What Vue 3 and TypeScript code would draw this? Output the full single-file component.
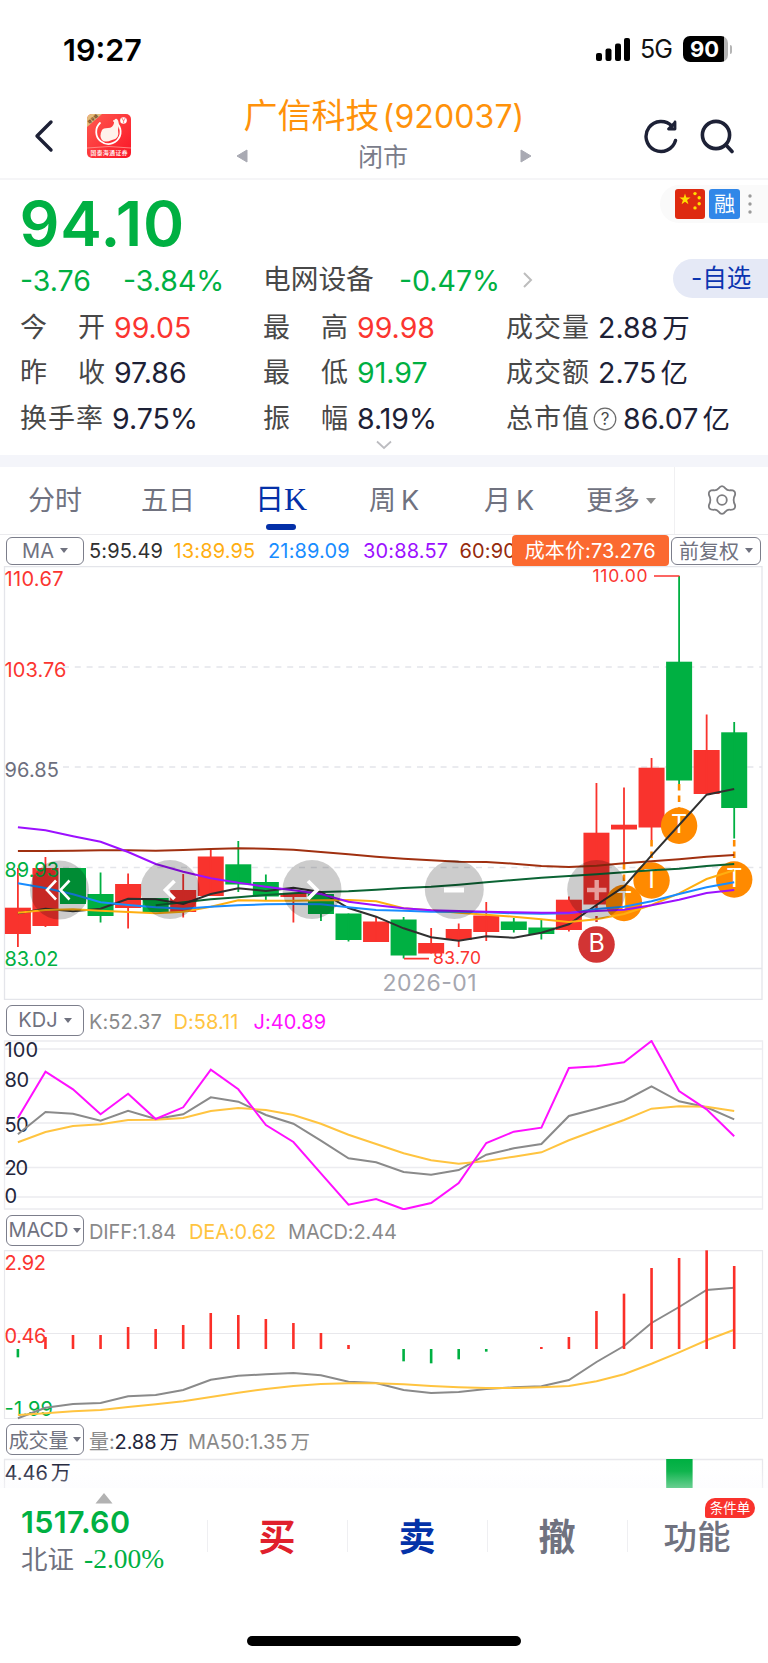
<script setup lang="ts">
type Candle = [up: number, top: number, bottom: number, high: number, low: number]

const STEP = 27.55
const X0 = 17.9
const cx = (i: number): number => X0 + STEP * i

const path = (ys: number[], base: number, start = 0): string =>
  ys.map((y, i) => `${cx(i + start).toFixed(1)},${(base + y / 3).toFixed(1)}`).join(' ')

const candles: Candle[] = [
  [1, 907.7, 934, 868, 947], [1, 868, 926, 857, 927], [0, 868, 904, 868, 904],
  [0, 894, 916, 872.5, 922.5], [1, 884, 908, 873.5, 928.5], [0, 898, 912, 898, 912],
  [1, 890, 912, 874, 917.5], [1, 856.5, 896, 849, 896], [0, 864.3, 884.5, 841, 892],
  [0, 882, 896.5, 874.5, 900], [1, 893, 897, 893, 922.5], [0, 894, 914, 894, 921],
  [0, 913.5, 940, 913.5, 941.5], [1, 921.5, 942, 916.5, 942], [0, 919.5, 955.5, 917, 958.5],
  [1, 943, 953.5, 928, 953.5], [1, 929, 940, 923.5, 947], [1, 915.5, 932, 902, 941],
  [0, 921.5, 930, 918, 932.5], [0, 927.5, 934, 919.5, 939.5], [1, 899.7, 930, 896.5, 931.5],
  [1, 832.7, 904.5, 783, 904.5], [1, 824.7, 829.5, 787.5, 863], [1, 767.7, 827.5, 758, 840],
  [0, 661.7, 780.5, 576, 784], [1, 750, 794, 714.5, 794], [0, 732.3, 808, 722, 838.5],
]

const averages = [
  { color: '#a03010', points: path([333, 333, 332, 331, 331, 332, 330, 327, 325, 326, 329, 336, 343, 350, 356, 361, 365, 366, 371, 378, 381, 377, 370, 364, 358, 350, 345], 740) },
  { color: '#0b6434', points: path([496, 487, 478, 472, 465, 460, 456, 454, 449, 444, 440, 434, 427, 420, 413, 408, 403, 397, 391, 386, 378, 372], 740, 5) },
  { color: '#303030', points: path([520, 506, 514, 506, 476, 478, 492, 462, 445, 453, 443, 456, 504, 530, 565, 592, 602, 589, 593, 578, 553, 495, 440, 346, 255, 164, 147], 740) },
  { color: '#ffae10', points: path([518, 510, 508, 512, 516, 520, 515, 500, 481, 482, 482, 481, 480, 484, 505, 511, 518, 524, 530, 538, 546, 538, 522, 495, 460, 417, 391], 740) },
  { color: '#188cff', points: path([430, 444, 463, 487, 495, 502, 506, 500, 496, 493, 492, 493, 502, 510, 512, 515, 515, 517, 520, 521, 520, 507, 500, 484, 462, 442, 427], 740) },
  { color: '#9c10ff', points: path([262, 271, 289, 305, 336, 372, 395, 415, 428, 440, 451, 462, 485, 496, 505, 511, 513, 515, 517, 518, 518, 513, 509, 496, 479, 459, 450], 740) },
]

const priceLabels = [
  { y: 586, w: 59, t: '110.67', c: '#fb3530' },
  { y: 676.5, w: 62, t: '103.76', c: '#fb3530' },
  { y: 776.5, w: 54.5, t: '96.85', c: '#6d6f7e' },
  { y: 877, w: 54.5, t: '89.93', c: '#00b042' },
  { y: 965.5, w: 54, t: '83.02', c: '#00b042' },
]

const marks = [
  { x: cx(24), y: 825.7, from: 784 },
  { x: cx(22), y: 903, from: 863 },
  { x: cx(23), y: 880.5, from: 840 },
  { x: cx(26), y: 879.5, from: 840 },
]

const kdj = [
  { color: '#8a8a8a', points: path([403, 336, 341, 362, 332, 357, 343, 292, 305, 345, 371, 422, 475, 487, 516, 524, 510, 464, 445, 432, 348, 326, 303, 259, 304, 322, 358], 1000) },
  { color: '#ffc440', points: path([427, 396, 378, 373, 360, 359, 354, 333, 324, 330, 345, 371, 404, 432, 460, 481, 491, 483, 470, 457, 421, 390, 360, 326, 319, 320, 333], 1000) },
  { color: '#ff10ff', points: path([354, 215, 268, 343, 281, 357, 322, 209, 268, 375, 426, 520, 614, 597, 628, 609, 549, 429, 395, 383, 204, 199, 187, 123, 273, 328, 409], 1000) },
]
const kdjLabels = [
  { y: 1056.5, w: 33.5, t: '100' }, { y: 1086.5, w: 24.5, t: '80' }, { y: 1131.5, w: 24, t: '50' },
  { y: 1175, w: 23.5, t: '20' }, { y: 1202.5, w: 11.5, t: '0' },
]

const macd = [
  { color: '#8a8a8a', points: path([655, 623, 612, 609, 589, 585, 570, 539, 527, 523, 519, 526, 545, 549, 570, 579, 576, 567, 562, 559, 540, 486, 438, 369, 321, 270, 263], 1200) },
  { color: '#ffc440', points: path([645, 640, 634, 630, 621, 613, 604, 591, 578, 567, 558, 552, 550, 550, 553, 558, 562, 564, 564, 562, 558, 544, 523, 491, 457, 421, 389], 1200) },
]
const bars = [472, 411, 405, 405, 381, 387, 375, 339, 345, 357, 369, 399, 435, 0, 484, 490, 478, 455, 0, 441, 411, 333, 281, 204, 174, 151, 198]
  .map((v, i) => ({ x: cx(i), y: 1200 + v / 3, up: v < 447, on: v > 0 }))
  .filter((b) => b.on)

const quotes: { label: string[]; value: string; unit?: string; tone?: string; help?: boolean }[] = [
  { label: ['今', '开'], value: '99.05', tone: 'up' },
  { label: ['最', '高'], value: '99.98', tone: 'up' },
  { label: ['成', '交', '量'], value: '2.88', unit: '万' },
  { label: ['昨', '收'], value: '97.86' },
  { label: ['最', '低'], value: '91.97', tone: 'down' },
  { label: ['成', '交', '额'], value: '2.75', unit: '亿' },
  { label: ['换', '手', '率'], value: '9.75%' },
  { label: ['振', '幅'], value: '8.19%' },
  { label: ['总', '市', '值'], value: '86.07', unit: '亿', help: true },
]
</script>

<template>
  <div class="screen">
    <div class="status">
      <span class="clock">19:27</span>
      <div class="radio">
        <svg width="35" height="23" viewBox="0 0 35 23"><rect x="0" y="15" width="6" height="8" rx="2" /><rect x="9.5" y="10.5" width="6" height="12.5" rx="2" /><rect x="19" y="5.5" width="6" height="17.5" rx="2" /><rect x="28" y="0" width="6" height="23" rx="2" /></svg>
        <span class="net">5G</span>
        <div class="battery"><span>90</span></div>
        <i class="nub"></i>
      </div>
    </div>

    <header class="head">
      <svg class="back" width="24" height="36" viewBox="0 0 24 36"><path d="M19 4 5 18 19 32" fill="none" stroke="#1d2136" stroke-width="3.4" stroke-linecap="round" stroke-linejoin="round" /></svg>
      <svg class="logo" width="44" height="44" viewBox="0 0 44 44">
        <defs>
          <linearGradient id="lg" x1="0" y1="0" x2="1" y2="1"><stop offset="0" stop-color="#ff5a50" /><stop offset="1" stop-color="#fa1426" /></linearGradient>
          <clipPath id="lc"><rect width="44" height="44" rx="5" /></clipPath>
        </defs>
        <g clip-path="url(#lc)">
          <rect width="44" height="44" fill="url(#lg)" />
          <path d="M0 0H15L0 13Z" fill="#e4bc7c" />
          <text x="0" y="0" font-size="4" font-weight="700" fill="#6d431c" transform="translate(2.200 10) rotate(-41)">尊享版</text>
          <path d="M27 7A12.2 12.2 0 1 1 13 9" fill="none" stroke="#fff" stroke-width="1.8" stroke-linecap="round" />
          <path d="M15 16Q16 14 21 14Q26 14 27 9Q27 4 30 5Q33 8 31 16Q33 25 25 26Q18 29 15 26Q12 22 15 16Z" fill="#fff2ec" />
          <circle cx="36.500" cy="6.500" r="3.300" fill="#fff" />
          <text x="34.6" y="9" font-size="6.5" fill="#f33">Y</text>
          <path d="M0 34Q22 31 44 34" fill="none" stroke="#ff9a94" stroke-width=".8" />
          <text x="3.500" y="41.300" font-size="5.800" font-weight="500" fill="#fff" textLength="37">国泰海通证券</text>
        </g>
      </svg>
      <svg class="tri" width="12" height="16" viewBox="0 0 12 16"><path d="M11 2V14L1 8Z" fill="#a9aab3" stroke="#a9aab3" stroke-linejoin="round" /></svg>
      <div class="title">
        <div class="name">广信科技<span>(920037)</span></div>
        <div class="state">闭市</div>
      </div>
      <svg class="tri" width="12" height="16" viewBox="0 0 12 16"><path d="M1 2V14L11 8Z" fill="#a9aab3" stroke="#a9aab3" stroke-linejoin="round" /></svg>
      <svg class="reload" width="36" height="36" viewBox="0 0 36 36" fill="none" stroke="#1d2136" stroke-width="3.400" stroke-linecap="round"><path d="M32.500 22.500A15 15 0 1 1 29 8.200" /><path d="M32 4V11H25.500L32 4.500" stroke-linejoin="round" stroke-width="2.800" /></svg>
      <svg class="find" width="36" height="36" viewBox="0 0 36 36" fill="none" stroke="#1d2136" stroke-width="3.600" stroke-linecap="round"><circle cx="17" cy="17" r="13.600" /><path d="M27 27 33 33.500" /></svg>
    </header>

    <section class="quote">
      <div class="price-row">
        <span class="price">94.10</span>
        <div class="tags">
          <svg width="30" height="30" viewBox="0 0 30 30"><rect width="30" height="30" rx="3" fill="#de2a10" /><g fill="#ffde00"><path d="M10 4.500 11.300 8.600H15.600L12.100 11.100 13.400 15.200 10 12.700 6.600 15.200 7.900 11.100 4.400 8.600H8.700Z" /><circle cx="20" cy="4.600" r="1.700" /><circle cx="24.200" cy="8.700" r="1.700" /><circle cx="24.200" cy="14.700" r="1.700" /><circle cx="20" cy="18.900" r="1.700" /></g></svg>
          <span class="margin">融</span>
          <svg width="6" height="22" viewBox="0 0 6 22" fill="#9a9a9a"><circle cx="3" cy="3" r="1.700" /><circle cx="3" cy="11" r="1.700" /><circle cx="3" cy="19" r="1.700" /></svg>
        </div>
      </div>
      <div class="change-row">
        <span class="chg">-3.76</span>
        <span class="pct">-3.84%</span>
        <span class="sector">电网设备</span>
        <span class="spct">-0.47%</span>
        <svg width="12" height="18" viewBox="0 0 12 18"><path d="M2 2 9 9 2 16" fill="none" stroke="#bdbdbd" stroke-width="2" /></svg>
        <span class="fav">-自选</span>
      </div>
      <div class="grid">
        <div v-for="q in quotes" :key="q.value" class="cell">
          <span class="lab"><b v-for="c in q.label" :key="c">{{ c }}</b></span>
          <svg v-if="q.help" class="help" width="24" height="24" viewBox="0 0 24 24"><circle cx="12" cy="12" r="10.800" fill="none" stroke="#6a6a6a" stroke-width="1.200" /><text x="12" y="18" text-anchor="middle" font-size="17" fill="#4a4a4a">?</text></svg>
          <span class="val" :class="q.tone">{{ q.value }}<b v-if="q.unit">{{ q.unit }}</b></span>
        </div>
      </div>
      <svg class="fold" width="16" height="10" viewBox="0 0 16 10"><path d="M1 1.500 8 8 15 1.500" fill="none" stroke="#bcbcc0" stroke-width="1.800" /></svg>
    </section>

    <nav class="tabs">
      <span class="t1">分时</span>
      <span class="t2">五日</span>
      <span class="t3 on">日<em>K</em></span>
      <span class="t4">周<i>K</i></span>
      <span class="t5">月<i>K</i></span>
      <span class="t6">更多<u class="caret"></u></span>
      <span class="gear">
        <svg width="32" height="32" viewBox="-16 -16 32 32" fill="none" stroke="#7d7d80" stroke-width="1.800" stroke-linejoin="round"><circle r="4.800" /><path d="M-3.400 -11.600Q0 -16.200 3.400 -11.600Q5.500 -9.300 8.500 -9.800Q14 -9.800 13 -5Q10.300 0 13 5Q14 9.800 8.500 9.800Q5.500 9.300 3.400 11.600Q0 16.200 -3.400 11.600Q-5.500 9.300 -8.500 9.800Q-14 9.800 -13 5Q-10.300 0 -13 -5Q-14 -9.800 -8.500 -9.800Q-5.500 -9.300 -3.400 -11.600Z" /></svg>
      </span>
    </nav>

    <div class="legend ma">
      <span class="pick">MA<u class="caret"></u></span>
      <span class="m1">5:95.49</span>
      <span class="m2">13:89.95</span>
      <span class="m3">21:89.09</span>
      <span class="m4">30:88.57</span>
      <span class="m5">60:90</span>
      <span class="cost">成本价:73.276</span>
      <span class="pick adj">前复权<u class="caret"></u></span>
    </div>

    <svg class="chart" width="768" height="434" viewBox="0 566 768 434">
      <g stroke="#e4e5ea" stroke-width="1.300" fill="none">
        <path d="M4.500 1000V566.700H762V999.400H4.500M4.500 968.500H762" />
        <path d="M63 667H762M63 767H762M63 867.500H762" stroke-dasharray="6 5.800" stroke-width="1.700" />
      </g>
      <g v-for="(c, i) in candles" :key="i" :fill="c[0] ? '#f9332d' : '#00b042'">
        <rect :x="cx(i) - 13" :y="c[1]" width="26" :height="c[2] - c[1]" />
        <rect :x="cx(i) - 0.9" :y="c[3]" width="1.8" :height="c[4] - c[3]" />
      </g>
      <path d="M596.500 905V925" stroke="#d23434" stroke-width="2.400" stroke-dasharray="6 5" />
      <circle cx="596.500" cy="944.500" r="18.300" fill="#d23434" />
      <text x="596.800" y="951.700" text-anchor="middle" font-size="25" fill="#fff">B</text>
      <g v-for="m in marks" :key="m.x">
        <path :d="`M${m.x} ${m.from}V${m.y - 18}`" stroke="#ff8a00" stroke-width="2.600" stroke-dasharray="6.500 5" />
        <circle :cx="m.x" :cy="m.y" r="18.200" fill="#ff8a00" />
        <text :x="m.x" :y="m.y + 7.3" text-anchor="middle" font-size="25" fill="#fff">T</text>
      </g>
      <polyline v-for="a in averages" :key="a.color" :points="a.points" :stroke="a.color" fill="none" stroke-width="2" />
      <text v-for="l in priceLabels" :key="l.t" x="4.500" :y="l.y" :textLength="l.w" :fill="l.c" font-size="20">{{ l.t }}</text>
      <g fill="#fb3530" stroke="none" font-size="17.500">
        <text x="592.500" y="582" textLength="55">110.00</text>
        <text x="433" y="963.500" textLength="48">83.70</text>
        <path d="M654 576H679.500M404 958.700H429" stroke="#fb3530" stroke-width="1.700" />
      </g>
      <text x="382.500" y="991" textLength="94" font-size="23" fill="#a6a7b0">2026-01</text>
      <g fill="#000" fill-opacity=".2">
        <circle cx="59.500" cy="890" r="29.500" /><circle cx="170" cy="889.500" r="29.500" /><circle cx="312" cy="889.500" r="29.500" /><circle cx="454.300" cy="889.500" r="29.500" /><circle cx="596.700" cy="889.500" r="29.500" />
      </g>
      <g fill="none" stroke="#fff" stroke-width="3.800">
        <path d="M56 880.500 47 890 56 899.500M69.500 880.500 60.500 890 69.500 899.500" stroke-width="2.600" />
        <path d="M174.500 881 165.500 890 174.500 899M308 881 317 890 308 899" />
        <path d="M444 890H464" stroke-width="5" />
        <path d="M587 890H606.500M596.700 880V887.800M596.700 892.200V900" stroke-width="4.400" stroke-opacity=".55" />
      </g>
    </svg>

    <div class="legend">
      <span class="pick">KDJ<u class="caret"></u></span>
      <span class="k1">K:52.37</span><span class="k2">D:58.11</span><span class="k3">J:40.89</span>
    </div>
    <svg class="chart" width="768" height="170" viewBox="0 1040 768 170">
      <path d="M4.500 1041H762.500V1209H4.500ZM4.500 1049H762M4.500 1078.500H762M4.500 1123H762M4.500 1167.500H762M4.500 1197H762" stroke="#ececf0" stroke-width="1.300" fill="none" />
      <text v-for="l in kdjLabels" :key="l.t" x="4.500" :y="l.y" :textLength="l.w" fill="#23263c" font-size="20">{{ l.t }}</text>
      <polyline v-for="k in kdj" :key="k.color" :points="k.points" :stroke="k.color" fill="none" stroke-width="2" />
    </svg>

    <div class="legend macd">
      <span class="pick">MACD<u class="caret"></u></span>
      <span class="d1">DIFF:1.84</span><span class="d2">DEA:0.62</span><span class="d3">MACD:2.44</span>
    </div>
    <svg class="chart" width="768" height="170" viewBox="0 1250 768 170">
      <path d="M4.500 1250.700H762.500V1418.500H4.500ZM4.500 1333.500H762" stroke="#e8e8ec" stroke-width="1.200" fill="none" />
      <text x="4.500" y="1270" textLength="41.500" font-size="20" fill="#fb3530">2.92</text>
      <text x="4.500" y="1342.500" textLength="42" font-size="20" fill="#fb3530">0.46</text>
      <text x="4.500" y="1415.500" textLength="48.500" font-size="20" fill="#00b042">-1.99</text>
      <polyline v-for="m in macd" :key="m.color" :points="m.points" :stroke="m.color" fill="none" stroke-width="2" />
      <rect v-for="b in bars" :key="b.x" :x="b.x - 1.3" :y="b.up ? b.y : 1349" width="2.6" :height="Math.abs(b.y - 1349)" :fill="b.up ? '#fb2f28' : '#00b042'" />
    </svg>

    <div class="legend vol">
      <span class="pick">成交量<u class="caret"></u></span>
      <span class="v1">量:<b>2.88<i>万</i></b></span><span class="v2">MA50:1.35<i>万</i></span>
    </div>
    <svg class="chart" width="768" height="30" viewBox="0 1458 768 30">
      <defs><linearGradient id="fade" x1="0" y1="0" x2="0" y2="1"><stop offset="0" stop-color="#fafafe" stop-opacity="0" /><stop offset=".4" stop-color="#fafafe" stop-opacity=".06" /><stop offset="1" stop-color="#fafafe" stop-opacity=".42" /></linearGradient></defs>
      <path d="M4.500 1488V1459.500H762.500V1488" stroke="#e8e8ec" stroke-width="1.300" fill="none" />
      <rect x="666.200" y="1459" width="26.400" height="29" fill="#00b042" />
      <text x="4.500" y="1480" font-size="20" fill="#23263c">4.46<tspan dx="3">万</tspan></text>
      <rect x="0" y="1460" width="768" height="28" fill="url(#fade)" />
    </svg>

    <footer class="dock">
      <div class="index">
        <svg class="rise" width="18" height="11" viewBox="0 0 18 11"><path d="M9 0 17.500 10.500H.5Z" fill="#b2b2b2" /></svg>
        <div class="pts">1517.60</div>
        <div class="mkt">北证<span>-2.00%</span></div>
      </div>
      <div class="act buy">买</div>
      <div class="act sell">卖</div>
      <div class="act undo">撤</div>
      <div class="act more">功能<span class="badge">条件单</span></div>
    </footer>
    <div class="home"></div>
  </div>
</template>

<style>
body { margin: 0; background: #fff; }
</style>

<style scoped>
.screen { width: 768px; height: 1663px; overflow: hidden; background: #fff; font-family: Inter, "Noto Sans CJK SC", sans-serif; color: #1d2136; position: relative; }
.screen * { box-sizing: border-box; white-space: nowrap; }
svg { display: block; flex: none; }
b, i, em, u { font-weight: inherit; font-style: normal; text-decoration: none; }

.status { height: 98px; display: flex; justify-content: space-between; padding: 0 36px 0 63px; align-items: center; }
.clock { font-size: 30.500px; font-weight: 600; color: #000; }
.radio { display: flex; align-items: center; }
.net { font-size: 25px; color: #111; margin-left: 9px; width: 43px; letter-spacing: -1px; }
.battery { width: 45px; height: 26px; border-radius: 7px; background: linear-gradient(90deg, #000 41px, #b5b5b5 41px); color: #fff; font-weight: 700; font-size: 22px; line-height: 26px; padding-left: 7px; }
.nub { width: 2.5px; height: 9px; margin-left: 1.5px; border-radius: 0 3px 3px 0; background: #b5b5b5; }

.head { height: 82px; border-bottom: 2px solid #f5f5f7; display: flex; align-items: flex-start; }
.back { margin: 20px 0 0 32px; }
.logo { margin: 16px 0 0 31px; }
.tri { margin: 50px 0 0 105px; }
.title { width: 272px; text-align: center; }
.title + .tri { margin-left: 0; }
.name { height: 38px; line-height: 35px; margin: 0 -20px; font-size: 34px; color: #ff920a; }
.name span { font-size: 32px; margin-left: 3px; letter-spacing: .1px; }
.state { font-size: 25px; line-height: 36px; color: #7a7c8a; margin: 3px 2px 0 0; }
.reload { margin: 20px 0 0 111px; }
.find { margin: 20px 0 0 20px; }

.quote { height: 275px; position: relative; }
.price-row { height: 81px; display: flex; justify-content: space-between; align-items: flex-start; }
.price { font-size: 62.500px; font-weight: 600; line-height: 86px; color: #00b042; padding-left: 19.500px; letter-spacing: .8px; }
.tags { width: 108px; height: 38px; margin-top: 5px; border-radius: 19px 0 0 19px; background: #fafafa; display: flex; align-items: center; padding-left: 15px; gap: 4px; }
.margin { width: 31px; height: 30px; border-radius: 3px; background: #3187e8; color: #fff; font-size: 21px; line-height: 29px; text-align: center; margin-right: 3px; }
.change-row { height: 46px; display: flex; align-items: center; font-size: 28.500px; color: #00b042; padding: 0 0 8px 20px; }
.chg { width: 103px; }
.pct { width: 140px; }
.sector { width: 136px; color: #484848; font-size: 27.700px; line-height: 34px; margin-top: -2px; }
.spct { width: 123px; }
.fav { margin-left: auto; width: 95px; height: 39px; border-radius: 20px 0 0 20px; background: #e5e9f6; color: #0b34b0; font-size: 24.500px; line-height: 38px; padding-left: 18px; margin-top: -3px; }
.grid { display: grid; grid-template-columns: 243px 243px 1fr; grid-auto-rows: 45.300px; padding-left: 20px; margin-top: -1.500px; }
.cell { display: flex; align-items: center; height: 45px; }
.lab { width: 85px; display: flex; justify-content: space-between; font-size: 27px; line-height: 40px; color: #484848; flex: none; }
.cell:nth-child(3n) .lab, .cell:nth-child(7) .lab { width: 83px; }
.val { font-size: 28.500px; line-height: 40px; margin-left: 9px; }
.val b { margin-left: 4px; font-size: 27.500px; }
.help { margin-left: 4px; }
.help + .val { margin-left: 6px; }
.up { color: #fb3530; }
.down { color: #00b042; }
.fold { position: absolute; left: 376px; top: 260px; }

.tabs { border-top: 12px solid #f4f5fa; height: 80px; border-bottom: 1px solid #ebebee; display: flex; color: #70727f; font-size: 27px; line-height: 67px; }
.tabs span { position: relative; flex: none; }
.tabs i { margin-left: 5px; }
.tabs em { font-family: "Liberation Serif", serif; font-size: 32px; }
.t1 { width: 113px; padding-left: 28px; }
.t2 { width: 118px; padding-left: 28px; }
.t3 { width: 138px; padding-left: 24px; }
.t4 { width: 115px; }
.t5 { width: 102px; }
.t6 { width: 88px; display: flex; align-items: center; }
.on { color: #0430a8; font-size: 29px; line-height: 65px; }
.on::after { content: ""; position: absolute; left: 35px; top: 57px; width: 30px; height: 6px; border-radius: 3px; background: #0430a8; }
.caret { display: inline-block; width: 0; height: 0; border: 4px solid transparent; border-top: 5px solid #70727f; border-bottom: 0; margin-left: 6px; vertical-align: middle; flex: none; }
.tabs .caret { border-width: 6px 5px 0; border-top-color: #8c8c8c; }
.gear { width: 94px; border-left: 1.500px solid #f0f0f2; padding: 17px 0 0 31px; }

.legend { height: 40px; display: flex; align-items: center; padding-left: 6px; font-size: 20px; letter-spacing: .05px; color: #8a8a8a; }
.legend > span { flex: none; }
.legend > span:not(.pick):not(.cost) { padding-top: 3px; }
.pick { width: 78px; height: 31px; border: 1.500px solid #7c7e8b; border-radius: 6px; color: #70727f; display: flex; align-items: center; justify-content: center; margin-right: 5px; background: #fff; letter-spacing: 0; }
.ma { height: 31px; letter-spacing: .15px; }
.legend.ma > span:not(.pick):not(.cost) { padding-top: 1px; }
.ma .pick { height: 28px; }
.m1 { width: 84.500px; color: #303030; }
.m2 { width: 94.500px; color: #ffae10; }
.m3 { width: 95px; color: #188cff; }
.m4 { width: 96.500px; color: #9c10ff; }
.m5 { width: 52px; color: #952a0c; overflow: hidden; }
.cost { width: 157.500px; height: 31px; line-height: 32px; border-radius: 4px; background: #fb6930; color: #fff; text-align: center; letter-spacing: .1px; }
.ma .adj { width: 90px; margin: 0 0 0 2px; }
.macd { letter-spacing: -.1px; }
.macd .pick, .vol .pick { letter-spacing: -.1px; }
.macd .caret, .vol .caret { margin-left: 5px; }
.k1 { width: 84.500px; } .k2 { width: 80px; color: #ffc440; } .k3 { color: #ff10ff; }
.d1 { width: 100px; } .d2 { width: 99px; color: #ffc440; }
.vol { height: 38px; letter-spacing: -.1px; }
.vol i { margin-left: 3px; font-size: 19.500px; }
.v1 { width: 99px; } .v1 b { color: #23263c; }

.dock { height: 90px; display: flex; position: relative; background: #fff; }
.index { width: 207px; padding: 5px 0 0 21px; position: relative; }
.rise { margin-left: 74px; }
.pts { font-size: 30.500px; line-height: 36px; font-weight: 600; color: #00b042; letter-spacing: .3px; }
.mkt { font-size: 26.500px; line-height: 38px; color: #70727f; display: flex; align-items: center; }
.mkt span { font-family: "Liberation Serif", serif; font-size: 27.500px; color: #00b042; margin-left: 10px; line-height: 36px; }
.act { width: 140px; height: 90px; line-height: 99px; text-align: center; font-size: 37px; font-weight: 700; position: relative; }
.act::before { content: ""; position: absolute; left: 0; top: 32px; width: 1px; height: 32px; background: #efeff2; }
.buy { color: #e0202c; } .sell { color: #0432a8; } .undo { color: #70727f; }
.more { color: #70727f; font-size: 33.500px; font-weight: 500; }
.badge { position: absolute; left: 78px; top: 10px; width: 50px; height: 20px; border-radius: 10px 10px 10px 2px; background: #f9332d; color: #fff; font-size: 13.500px; line-height: 20px; font-weight: 400; }
.home { width: 274px; height: 10px; border-radius: 5px; background: #000; margin: 58px 0 0 247px; }
</style>
